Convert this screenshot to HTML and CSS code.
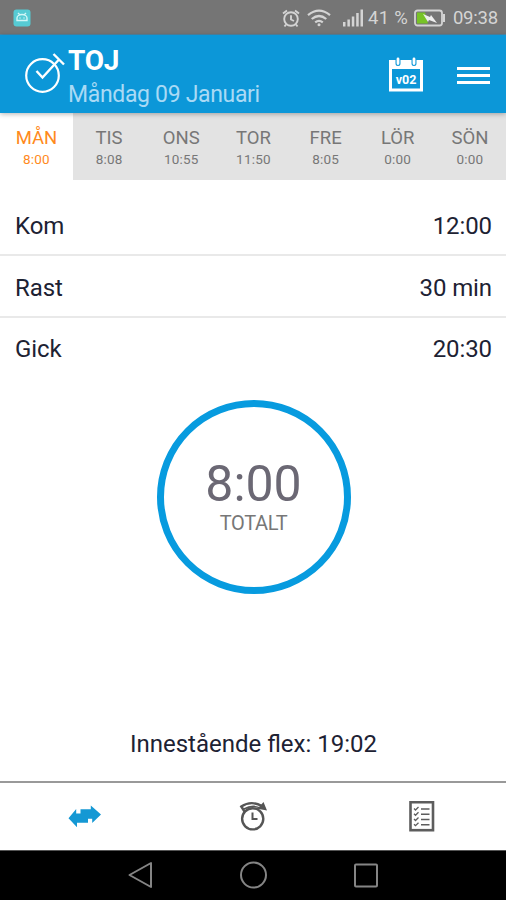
FILE: index.html
```html
<!DOCTYPE html>
<html lang="sv">
<head>
<meta charset="utf-8">
<title>TOJ</title>
<link rel="stylesheet" href="styles.css">
</head>
<body>
<div class="status">
  <svg class="droid" width="18" height="18" viewBox="0 0 18 18"><rect x=".5" y=".5" width="17" height="17" rx="3" fill="#56cbd4"/><path d="M4 11.5V9a5 3.5 0 0 1 10 0v2.5zM5 4l2 2M13 4l-2 2" fill="none" stroke="#d2f6f7" stroke-width="1.4"/><path d="M6.500 9h1M10.500 9h1" stroke="#d2f6f7" stroke-width="1.500"/></svg>
  <svg class="alarm" width="18" height="19" viewBox="0 0 18 19" fill="none" stroke="#d4d4d4" stroke-width="1.900"><circle cx="9" cy="10" r="6.800"/><path d="M1 4.500l4-3M17 4.500l-4-3M9 6.200V10.500l3 1.500M4 15.500l-1.500 2M14 15.500l1.500 2"/></svg>
  <svg class="wifi" width="24" height="18" viewBox="0 0 24 18" fill="none" stroke="#d4d4d4" stroke-width="2.200"><path d="M1 6.200q11-9 22 0M4.700 10q7.300-6 14.600 0M8.200 13.400q3.800-3 7.600 0"/><circle cx="12" cy="15.700" r="1.500" fill="#d4d4d4" stroke="none"/></svg>
  <svg class="signal" width="22" height="18" viewBox="0 0 22 18" fill="#d4d4d4"><path d="M1 13h2.500v4.500H1zM5.400 10.500h2.500v7H5.400zM9.800 7.500h2.500v10H9.800zM14.200 4h2.500v13.500h-2.500zM18.500.5H21v17h-2.500z"/></svg>
  <span class="percent">41 %</span>
  <svg class="battery" width="32" height="18" viewBox="0 0 32 18"><rect x="1" y="1.500" width="27" height="15" rx="2.500" fill="none" stroke="#d4d4d4" stroke-width="1.800"/><path d="M29 5h2v8h-2z" fill="#d4d4d4"/><path d="M3 3.500h8l3 11H3z" fill="#77c326"/><path d="M9 5l7 3 1-2 6 8-8-3-1 2z" fill="#eee"/></svg>
  <span class="clock">09:38</span>
</div>
<header class="header">
  <svg class="logo" width="41" height="44" viewBox="0 0 41 44" fill="none" stroke="#fff" stroke-width="2.200"><circle cx="18.500" cy="26.500" r="16.300"/><path d="M12.500 22l6 6.500L35 10.500M29.500 5l10.500 10.500" stroke-width="2.400"/></svg>
  <div class="heading"><h1>TOJ</h1><p>Måndag 09 Januari</p></div>
  <div class="calendar">
    <svg width="34" height="36" viewBox="0 0 34 36"><path d="M0 3h34v31.500H0zM3 12v19.500h28V12z" fill="#fff" fill-rule="evenodd"/><path d="M9 2.500v4M25 2.500v4" stroke="#0c97d8" stroke-width="5" stroke-linecap="round"/><path d="M9 2v4.500M25 2v4.500" stroke="#fff" stroke-width="2.800" stroke-linecap="round"/></svg>
    <span>v02</span>
  </div>
  <div class="menu"><i></i><i></i><i></i></div>
</header>
<nav class="days">
  <div class="day active"><b>MÅN</b><span>8:00</span></div>
  <div class="day"><b>TIS</b><span>8:08</span></div>
  <div class="day"><b>ONS</b><span>10:55</span></div>
  <div class="day"><b>TOR</b><span>11:50</span></div>
  <div class="day"><b>FRE</b><span>8:05</span></div>
  <div class="day"><b>LÖR</b><span>0:00</span></div>
  <div class="day"><b>SÖN</b><span>0:00</span></div>
</nav>
<main class="main">
  <div class="row first"><span>Kom</span><span>12:00</span></div>
  <div class="row"><span>Rast</span><span>30 min</span></div>
  <div class="row last"><span>Gick</span><span>20:30</span></div>
  <div class="total"><span class="hours">8:00</span><span class="label">TOTALT</span></div>
  <p class="flex">Innestående flex: 19:02</p>
</main>
<footer class="tabs">
  <div><svg width="34" height="24" viewBox="0 0 34 24"><path d="M.5 13.300L8.200 4V8.500H12.500V4.300H22.800V.5L33 9.500 24.200 18V13.800H20v4H9v4.500z" fill="#1598d4"/></svg></div>
  <div><svg width="30" height="32" viewBox="0 0 30 32" fill="none" stroke="#555" stroke-width="2.400"><circle cx="14.700" cy="17.800" r="10.600"/><path d="M6.500 10.500L3.300 5.500Q13-1 24 5" /><path d="M6 8q9-5 17-.5" stroke-width="1.500"/><path d="M25.500 1l3.500 8.500-9.500-1.800z" fill="#555" stroke="none"/><path d="M14.500 11.500v6.500h5" stroke-width="2"/></svg></div>
  <div><svg width="26" height="32" viewBox="0 0 26 32" fill="none" stroke="#5d5d5d"><rect x="1.500" y="1.200" width="22.500" height="28" stroke-width="2.600"/><path d="M12 8h8.500M12 13.300h8.500M12 18.500h8.500M12 23.700h8.500" stroke-width="1.600"/><path d="M5 7.500l1.500 1.500L9.500 6M5 12.800l1.500 1.500 3-3M5 18l1.500 1.500 3-3M5 23.200l1.500 1.500 3-3" stroke-width="1.300"/></svg></div>
</footer>
<div class="system">
  <svg width="26" height="28" viewBox="0 0 26 28"><path d="M2.500 14L24 2v24z"/></svg>
  <svg width="28" height="28" viewBox="0 0 28 28"><circle cx="14.500" cy="14" r="12.500"/></svg>
  <svg width="26" height="28" viewBox="0 0 26 28"><rect x="2" y="3.500" width="22" height="22" rx="1"/></svg>
</div>
</body>
</html>
```
FILE: styles.css
```css
* { box-sizing: border-box; }
body { margin: 0; width: 506px; height: 900px; overflow: hidden; display: flex; flex-direction: column; background: #fff; font-family: Roboto, sans-serif; }
h1, p { margin: 0; font-weight: 400; }
svg { display: block; flex: none; }

.status { height: 35px; flex: none; background: #757575; border-bottom: 1px solid #4f87a6; display: flex; align-items: center; padding: 2px 8px 0 13px; color: #d4d4d4; font-size: 18.5px; }
.alarm { margin-left: 251px; }
.wifi { margin-left: 7px; }
.signal { margin-left: 11px; }
.percent { width: 42px; margin-left: 4px; white-space: nowrap; letter-spacing: .3px; }
.battery { margin-left: 4px; }
.clock { margin-left: auto; letter-spacing: -.2px; }

.header { height: 78px; flex: none; background: #0c97d8; display: flex; padding-left: 24px; color: #fff; position: relative; z-index: 1; box-shadow: 0 1px 5px rgba(0,0,0,.3); }
.logo { margin-top: 14px; }
.heading { width: 240px; margin-left: 3px; padding-top: 9px; }
.heading h1 { font-size: 28px; line-height: 33px; font-weight: 700; letter-spacing: -.2px; }
.heading p { font-size: 23px; line-height: 36px; letter-spacing: -.33px; color: #a9daf5; white-space: nowrap; }
.calendar { width: 34px; height: 36px; margin: 22px 0 0 81px; position: relative; }
.calendar span { position: absolute; left: 0; right: 0; top: 14px; line-height: 17px; text-align: center; font-size: 12.5px; font-weight: 700; }
.menu { width: 33px; margin: 32px 0 0 34px; display: flex; flex-direction: column; gap: 4px; }
.menu i { height: 3px; background: #fff; }

.days { height: 67px; flex: none; display: grid; grid-template-columns: 73px repeat(6, 1fr); background: #e3e3e3; color: #777; }
.day { display: flex; flex-direction: column; align-items: center; padding-top: 15px; }
.day b { font-weight: 400; font-size: 18.5px; line-height: 21px; }
.day span { font-size: 13.5px; line-height: 20px; letter-spacing: .2px; }
.active { background: #fff; color: #ff8a1c; }

.main { flex: 1; display: flex; flex-direction: column; align-items: center; }
.row { width: 100%; height: 62px; flex: none; display: flex; justify-content: space-between; align-items: center; padding: 4px 14px 0 15px; border-bottom: 2px solid #e9e9e9; font-size: 24px; letter-spacing: -.1px; color: #1d2233; }
.first { height: 76px; padding-top: 18px; }
.last { border-bottom: 0; padding-top: 0; }
.total { width: 194px; height: 194px; flex: none; margin: 20px 0 0 1px; border: 7px solid #079bdf; border-radius: 50%; display: flex; flex-direction: column; align-items: center; color: #6b6874; padding-top: 48px; }
.hours { font-size: 50px; line-height: 58px; }
.label { font-size: 20px; line-height: 20px; color: #777; letter-spacing: -.3px; }
.flex { margin: 135px 0 0 1px; font-size: 24px; line-height: 30px; color: #1d2233; }

.tabs { height: 69px; flex: none; display: grid; grid-template-columns: repeat(3, 1fr); border-top: 2px solid #999; padding-left: 1px; }
.tabs div { display: flex; align-items: center; justify-content: center; }
.system { height: 50px; flex: none; background: #000; border-top: 1px solid #555; display: flex; justify-content: center; gap: 86px; padding-top: 10px; }
.system svg { fill: none; stroke: #858585; stroke-width: 2; stroke-linejoin: round; }
```
